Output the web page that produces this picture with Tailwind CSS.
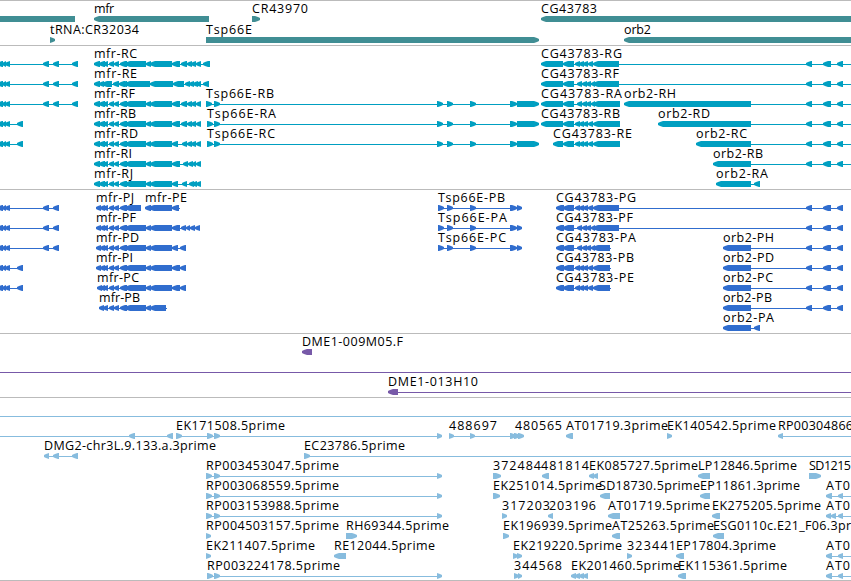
<!DOCTYPE html>
<html lang="en">
<head>
  <meta charset="utf-8">
  <meta name="viewport" content="width=device-width, initial-scale=1.0" />
  <title>Genome browser - 3L</title>
  <script src="https://cdn.jsdelivr.net/npm/@tailwindcss/browser@4"></script>
</head>
<body class="bg-white overflow-hidden">

  <div class="flex flex-col w-[851px] h-[581px] border-b border-[#bbbbbb] text-black text-[12.5px] font-['Open_Sans','DejaVu_Sans',sans-serif]">
    <!-- Genes -->
    <section class="h-[45px] border-t border-[#bbbbbb]">
      <svg id="genes" class="block w-full h-full overflow-hidden text-[#408e94]"></svg>
    </section>
    <!-- Transcripts -->
    <section class="h-[144px] border-t border-[#bbbbbb]">
      <svg id="transcripts" class="block w-full h-full overflow-hidden text-[#009fc1]"></svg>
    </section>
    <!-- CDS -->
    <section class="h-[144px] border-t border-[#bbbbbb]">
      <svg id="cds" class="block w-full h-full overflow-hidden text-[#306dce]"></svg>
    </section>
    <!-- BACs -->
    <section class="h-[64px] border-t border-[#bbbbbb]">
      <svg id="bacs" class="block w-full h-full overflow-hidden text-[#7759a8]"></svg>
    </section>
    <!-- ESTs -->
    <section class="flex-1 border-t border-[#bbbbbb]">
      <svg id="ests" class="block w-full h-full overflow-hidden text-[#87bcde]"></svg>
    </section>
  </div>

  <script>
    const NS = 'http://www.w3.org/2000/svg';

    function add(svg, tag, attrs) {
      const el = document.createElementNS(NS, tag);
      for (const k in attrs) el.setAttribute(k, attrs[k]);
      svg.appendChild(el);
      return el;
    }

    // block that ends in a rounded-off head, 6px high
    function block(svg, x1, x2, y, dir) {
      const head = Math.min(5, x2 - x1);
      const tip = dir === '<' ? x1 : x2;
      const back = dir === '<' ? x2 : x1;
      const s = dir === '<' ? 1 : -1;
      const pts = [
        [tip, y - 1], [tip + s * 2, y - 2], [tip + s * head, y - 3], [back, y - 3],
        [back, y + 3], [tip + s * head, y + 3], [tip + s * 2, y + 2], [tip, y + 1]
      ];
      add(svg, 'polygon', { points: pts.join(' '), class: 'fill-current' });
    }

    // feature: [row, dir, label, labelX, labelWidth, 'x1,x2 x1,x2 ...', lineEnd]
    function draw(id, first, pitch, features) {
      const svg = document.getElementById(id);
      features.forEach(([row, dir, label, x, w, spans, end]) => {
        const y = first + row * pitch;
        const exons = spans.split(' ').map(s => s.split(',').map(Number));
        const from = exons[0][0];
        const to = end || exons[exons.length - 1][1];
        add(svg, 'rect', { x: from, y: y, width: to - from, height: 1, class: 'fill-current' });
        exons.forEach(e => block(svg, e[0], e[1], y, dir));
      });
      features.forEach(([row, dir, label, x, w]) => {
        if (!label) return;
        const attrs = { x: x, y: first + row * pitch - 6, class: 'fill-black' };
        if (w) attrs.textLength = w;
        add(svg, 'text', attrs).textContent = label;
      });
    }

    draw('genes', 18, 21, [
      [0, '<', '', 0, 0, '-10,75'],
      [0, '<', 'mfr', 94, 20, '94,209'],
      [0, '>', 'CR43970', 252, 56, '252,260'],
      [0, '<', 'CG43783', 541, 56, '541,870'],
      [1, '>', 'tRNA:CR32034', 50, 89, '50,55'],
      [1, '>', 'Tsp66E', 206, 46, '206,539'],
      [1, '<', 'orb2', 624, 27, '624,870'],
    ]);

    const left = '-3,3 2,6 5,10 ';
    const mfrA = '94,100 99,105 103,108 109,114 114,119 120,127 125,146 146,151 150,172 ';
    const cgEnd = '575,580 579,584 583,588 588,593 593,';
    const cgGap = '577,582 582,587 586,591 591,595 593,';
    const orbEnd = ' 806,812 823,831 837,843';

    draw('transcripts', 18, 20, [
      [0, '<', '', 0, 0, left + '43,49 53,59 72,78'],
      [1, '<', '', 0, 0, left + '43,49 53,59 72,78'],
      [2, '<', '', 0, 0, left + '43,49 53,59 72,78'],
      [3, '<', '', 0, 0, left + '17,23'],
      [4, '<', '', 0, 0, left + '17,23'],
      [0, '<', 'mfr-RC', 94, 43, mfrA + '172,180 181,187 187,192 191,196 196,201 203,210'],
      [1, '<', 'mfr-RE', 94, 43, '94,100 99,104 102,112 113,119 119,125 121,127 125,150 150,173 173,184 185,190 189,194 193,198 196,201 203,209'],
      [2, '<', 'mfr-RF', 94, 41, mfrA + '172,180 181,187 187,192 191,196 196,201'],
      [3, '<', 'mfr-RB', 94, 42, mfrA + '172,180 181,187 187,192 191,196 196,201'],
      [4, '<', 'mfr-RD', 94, 44, mfrA + '172,178 182,187 187,192 191,196 196,201'],
      [5, '<', 'mfr-RI', 94, 38, mfrA + '172,180 183,188 188,193 192,196 196,201'],
      [6, '<', 'mfr-RJ', 94, 39, mfrA + '172,178 182,187 189,194 192,197 196,201'],
      [2, '>', 'Tsp66E-RB', 206, 68, '206,212 214,220 437,443 447,453 470,476 510,517 517,539'],
      [3, '>', 'Tsp66E-RA', 207, 69, '207,213 214,220 437,443 447,453 470,476 510,517 517,539'],
      [4, '>', 'Tsp66E-RC', 207, 68, '207,213 214,220 437,443 447,453 470,476 510,517 517,539'],
      [0, '<', 'CG43783-RG', 541, 81, '541,563 563,574 ' + cgEnd + '619' + orbEnd, 851],
      [1, '<', 'CG43783-RF', 541, 78, '541,563 563,574 ' + cgGap + '619' + orbEnd, 851],
      [2, '<', 'CG43783-RA', 541, 81, '541,563 563,574 ' + cgGap + '620'],
      [3, '<', 'CG43783-RB', 541, 79, '541,563 563,574 ' + cgEnd + '620'],
      [4, '<', 'CG43783-RE', 553, 79, '553,563 563,574 ' + cgEnd + '620'],
      [2, '<', 'orb2-RH', 624, 52, '624,751' + orbEnd, 851],
      [3, '<', 'orb2-RD', 658, 52, '658,751' + orbEnd, 851],
      [4, '<', 'orb2-RC', 696, 51, '696,751' + orbEnd, 851],
      [5, '<', 'orb2-RB', 713, 50, '713,751' + orbEnd, 851],
      [6, '<', 'orb2-RA', 716, 52, '716,751 754,760'],
    ]);

    const mfrP = '103,108 109,114 114,119 120,127 125,146 146,151 150,172 ';

    draw('cds', 18, 20, [
      [0, '<', '', 0, 0, left + '43,49 53,59'],
      [1, '<', '', 0, 0, left + '43,49 53,59'],
      [2, '<', '', 0, 0, left + '43,49 53,59'],
      [3, '<', '', 0, 0, left + '17,23'],
      [4, '<', '', 0, 0, left + '17,23'],
      [0, '<', 'mfr-PJ', 96, 38, '96,101 100,105 103,108 109,114 114,119 120,127 125,141'],
      [0, '<', 'mfr-PE', 145, 42, '145,151 149,172 172,179', 180],
      [1, '<', 'mfr-PF', 96, 40, '96,101 100,105 ' + mfrP + '172,180 181,186 186,190 190,195 195,200'],
      [2, '<', 'mfr-PD', 96, 43, '96,101 100,105 ' + mfrP + '172,178 180,186'],
      [3, '<', 'mfr-PI', 96, 37, '96,101 100,105 ' + mfrP + '172,180 180,186'],
      [4, '<', 'mfr-PC', 97, 42, '97,102 100,105 ' + mfrP + '172,180 180,186'],
      [5, '<', 'mfr-PB', 99, 41, '99,104 103,108 109,114 114,119 120,127 125,146 146,151 150,166', 167],
      [0, '>', 'Tsp66E-PB', 438, 67, '438,444 447,453 470,476 510,517 517,522'],
      [1, '>', 'Tsp66E-PA', 438, 69, '438,444 447,453 470,476 510,517 517,522'],
      [2, '>', 'Tsp66E-PC', 438, 68, '438,444 447,453 470,476 510,517 517,522'],
      [0, '<', 'CG43783-PG', 556, 80, '556,564 563,574 ' + cgEnd + '619' + orbEnd],
      [1, '<', 'CG43783-PF', 556, 77, '556,564 563,574 ' + cgGap + '619' + orbEnd],
      [2, '<', 'CG43783-PA', 556, 80, '556,564 563,574 ' + cgGap + '610', 611],
      [3, '<', 'CG43783-PB', 556, 78, '556,564 563,574 ' + cgEnd + '610', 611],
      [4, '<', 'CG43783-PE', 556, 78, '556,564 563,574 ' + cgEnd + '610', 611],
      [2, '<', 'orb2-PH', 723, 51, '723,751' + orbEnd],
      [3, '<', 'orb2-PD', 723, 51, '723,751' + orbEnd],
      [4, '<', 'orb2-PC', 723, 50, '723,751' + orbEnd],
      [5, '<', 'orb2-PB', 723, 49, '723,751' + orbEnd],
      [6, '<', 'orb2-PA', 723, 51, '723,751 754,760'],
    ]);

    // clones running past both edges only show as a line
    add(document.getElementById('bacs'), 'rect', { x: 0, y: 38, width: 851, height: 1, class: 'fill-current' });
    draw('bacs', 18, 40, [
      [0, '<', 'DME1-009M05.F', 302, 101, '302,312'],
      [1, '<', 'DME1-013H10', 388, 90, '388,398', 851],
    ]);

    add(document.getElementById('ests'), 'rect', { x: 0, y: 18, width: 851, height: 1, class: 'fill-current' });
    draw('ests', 38, 20, [
      [0, '<', '', 0, 0, '-10,-5 129,135 167,173'],
      [0, '>', 'EK171508.5prime', 176, 109, '176,182 207,213 214,220 437,442'],
      [0, '>', '488697', 449, 48, '449,454 470,475 510,516'],
      [0, '>', '480565', 515, 47, '514,520 518,524'],
      [0, '<', 'AT01719.3prime', 566, 102, '566,573'],
      [0, '>', 'EK140542.5prime', 667, 109, '667,672'],
      [0, '<', 'RP00304866', 778, 75, '778,783', 851],
      [1, '<', 'DMG2-chr3L.9.133.a.3prime', 44, 172, '44,49 53,59 72,78'],
      [1, '>', 'EC23786.5prime', 304, 101, '304,310', 851],
      [2, '>', 'RP003453047.5prime', 206, 133, '206,212 214,220 437,442'],
      [2, '>', '372484', 493, 48, '493,501'],
      [2, '<', '481814', 541, 48, '542,549'],
      [2, '<', 'EK085727.5prime', 589, 109, '589,594 593,598'],
      [2, '<', 'LP12846.5prime', 698, 99, '698,710'],
      [2, '>', 'SD1215', 809, 42, '809,821'],
      [3, '>', 'RP003068559.5prime', 206, 133, '206,212 214,220 437,442'],
      [3, '>', 'EK251014.5prime', 493, 109, '493,500'],
      [3, '<', 'SD18730.5prime', 599, 101, '600,610'],
      [3, '<', 'EP11861.3prime', 700, 100, '700,710'],
      [3, '<', 'AT0', 826, 24, '826,832 838,843', 851],
      [4, '>', 'RP003153988.5prime', 206, 133, '206,212 214,220 437,442'],
      [4, '>', '317203', 502, 48, '502,507'],
      [4, '<', '203196', 549, 47, '548,553'],
      [4, '<', 'AT01719.5prime', 608, 102, '608,620'],
      [4, '<', 'EK275205.5prime', 712, 109, '712,720'],
      [4, '<', 'AT0', 826, 24, '826,831 831,836 838,843', 851],
      [5, '>', 'RP004503157.5prime', 206, 133, '206,211'],
      [5, '>', 'RH69344.5prime', 346, 103, '346,357'],
      [5, '>', 'EK196939.5prime', 503, 109, '503,509'],
      [5, '<', 'AT25263.5prime', 612, 102, '612,620'],
      [5, '<', 'ESG0110c.E21_F06.3pr', 713, 138, '713,724'],
      [6, '>', 'EK211407.5prime', 206, 109, '206,211'],
      [6, '<', 'RE12044.5prime', 334, 101, '334,346'],
      [6, '>', 'EK219220.5prime', 513, 109, '513,518 517,522'],
      [6, '>', '323441', 627, 49, '627,632'],
      [6, '<', 'EP17804.3prime', 676, 100, '676,684'],
      [6, '<', 'AT0', 826, 24, '826,832 838,843', 851],
      [7, '>', 'RP003224178.5prime', 207, 133, '207,213 214,220 437,442'],
      [7, '>', '344568', 514, 48, '514,519 518,522'],
      [7, '<', 'EK201460.5prime', 571, 109, '571,576 575,580 579,584 583,588'],
      [7, '<', 'EK115361.5prime', 678, 109, '678,686'],
      [7, '<', 'AT0', 826, 24, '826,832 838,843', 851],
    ]);
  </script>

</body>
</html>
